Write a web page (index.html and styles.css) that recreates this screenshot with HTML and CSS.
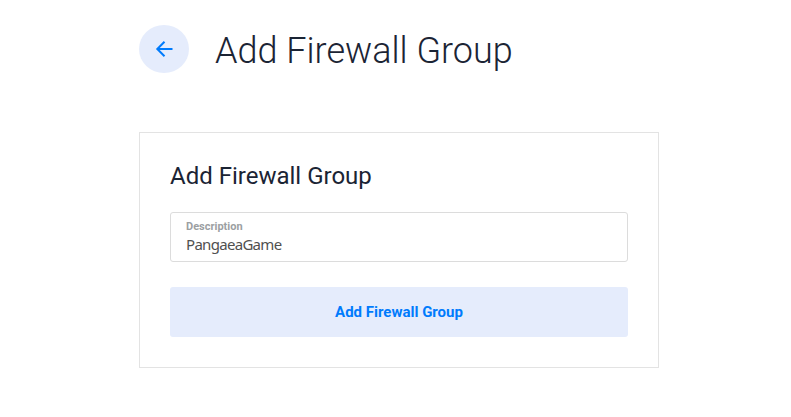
FILE: index.html
```html
<!DOCTYPE html>
<html lang="en">
<head>
<meta charset="utf-8">
<title>Add Firewall Group</title>
<link rel="stylesheet" href="styles.css">
</head>
<body>
<main class="page">
  <header class="page-header">
    <a class="back" href="#" aria-label="Back">
      <svg width="18" height="18" viewBox="0 0 18 18" fill="none" stroke="currentColor" stroke-width="2"><path d="M17.5 9H2.5M9.5 1.8L2.3 9L9.5 16.2"/></svg>
    </a>
    <h1 class="page-title">Add Firewall Group</h1>
  </header>
  <form class="card">
    <h2 class="card-title">Add Firewall Group</h2>
    <label class="field">
      <span class="field-label">Description</span>
      <input class="field-input" type="text" value="PangaeaGame">
    </label>
    <button class="submit" type="button">Add Firewall Group</button>
  </form>
</main>
</body>
</html>
```

FILE: styles.css
```css
* { box-sizing: border-box; }
body { margin: 0; background: #fff; color: #1b2434; font-family: Roboto, sans-serif; }
.page { width: 520px; margin-left: 139px; padding-top: 25px; }
.page-header { display: flex; align-items: center; height: 48px; margin-bottom: 59px; }
.back { display: flex; align-items: center; justify-content: center; width: 50px; height: 48px; border-radius: 50%; background: #e5ecfc; color: #007bfc; }
.page-title { margin: 3px 0 0 26px; font-size: 36px; font-weight: 300; line-height: 48px; white-space: nowrap; }
.card { height: 236px; padding: 29px 30px; border: 1px solid #e3e3e3; }
.card-title { margin: 0 0 22px; font-size: 24px; font-weight: 400; line-height: 28px; }
.field { display: flex; flex-direction: column; height: 50px; padding: 7px 15px; border: 1px solid #dcdcdc; border-radius: 3px; }
.field-label { color: #9c9fa2; font-size: 11px; font-weight: 700; line-height: 14px; }
.field-input { width: 100%; height: 22px; padding: 0; border: 0; outline: 0; background: none; color: #505050; font: 15px "Noto Sans", sans-serif; letter-spacing: -0.7px; }
.submit { width: 100%; height: 50px; margin-top: 25px; border: 0; border-radius: 3px; background: #e5ecfc; color: #007bfc; font: 700 15px Roboto, sans-serif; }
```
